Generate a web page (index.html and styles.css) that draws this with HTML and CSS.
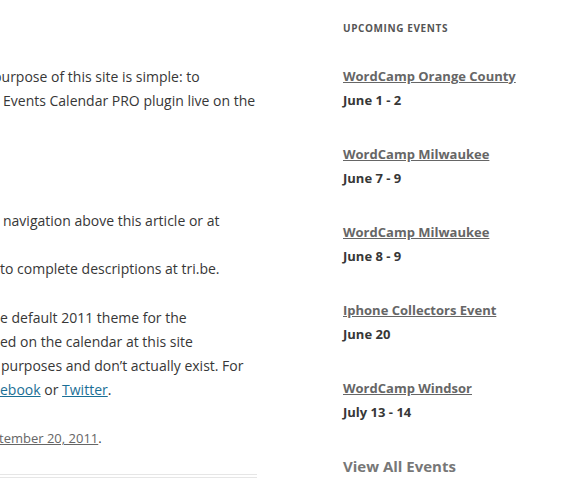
FILE: index.html
```html
<!DOCTYPE html>
<html>
<head>
<meta charset="utf-8">
<link rel="stylesheet" href="styles.css">
</head>
<body>
<div class="page">
  <main class="content">
    <p class="para p1">
      <span class="line cut-p">purpose of this site is simple: to</span>
      <span class="line in3">Events Calendar PRO plugin live on the</span>
    </p>
    <p class="para p2">
      <span class="line in3">navigation above this article or at</span>
    </p>
    <p class="para p3">
      <span class="line">to complete descriptions at tri.be.</span>
    </p>
    <p class="para p4">
      <span class="line">e default 2011 theme for the</span>
      <span class="line">ed on the calendar at this site</span>
      <span class="line in1">purposes and don’t actually exist. For</span>
      <span class="line"><a class="link" href="#">ebook</a> or <a class="link" href="#">Twitter</a>.</span>
    </p>
    <p class="para meta">
      <span class="line cut-t"><a class="date" href="#">tember 20, 2011</a>.</span>
    </p>
    <div class="sep"></div>
  </main>
  <aside class="sidebar">
    <h3 class="widget-title">Upcoming Events</h3>
    <ul class="events">
      <li class="event"><a class="ev-title" href="#">WordCamp Orange County</a><div class="ev-date">June 1 - 2</div></li>
      <li class="event"><a class="ev-title" href="#">WordCamp Milwaukee</a><div class="ev-date">June 7 - 9</div></li>
      <li class="event"><a class="ev-title" href="#">WordCamp Milwaukee</a><div class="ev-date">June 8 - 9</div></li>
      <li class="event"><a class="ev-title" href="#">Iphone Collectors Event</a><div class="ev-date">June 20</div></li>
      <li class="event"><a class="ev-title" href="#">WordCamp Windsor</a><div class="ev-date">July 13 - 14</div></li>
    </ul>
    <a class="view-all" href="#">View All Events</a>
  </aside>
</div>
</body>
</html>
```

FILE: styles.css
```css
html, body {
  margin: 0;
  padding: 0;
  background: #fff;
}
body {
  font-family: "Open Sans", "Liberation Sans", sans-serif;
  color: #373737;
  font-size: 14px;
  line-height: 24px;
  overflow: hidden;
}
.page {
  display: flex;
  align-items: flex-start;
}
.content {
  width: 257px;
  flex: none;
  padding-top: 65px;
}
.para {
  margin: 0 0 24px 0;
}
.p1 { margin-bottom: 96px; }
.p3 { margin-bottom: 25px; }
.line {
  display: block;
  white-space: nowrap;
}
.meta {
  font-size: 13px;
}
.cut-p { margin-left: -7px; }
.cut-t { margin-left: -1px; }
.in3 { padding-left: 3px; }
.in1 { padding-left: 1px; }
.link {
  color: #1b6f96;
  text-decoration: underline;
}
.date {
  color: #666;
  text-decoration: underline;
}
.sep {
  margin-top: 1px;
  border-top: 4px double #e6e6e6;
}
.sidebar {
  margin-left: 86px;
  padding-top: 16px;
}
.widget-title {
  margin: 0 0 24px 0;
  font-size: 10px;
  line-height: 24px;
  font-weight: 700;
  text-transform: uppercase;
  letter-spacing: 0.06em;
  color: #555;
}
.events {
  list-style: none;
  margin: 0;
  padding: 0;
}
.event {
  margin-bottom: 30px;
}
.ev-title {
  display: block;
  font-size: 13px;
  font-weight: 700;
  color: #666;
  text-decoration: underline;
}
.ev-date {
  font-size: 13px;
  font-weight: 700;
  color: #373737;
}
.view-all {
  display: block;
  font-size: 15px;
  font-weight: 700;
  color: #777;
  text-decoration: none;
  line-height: 24px;
}
```
